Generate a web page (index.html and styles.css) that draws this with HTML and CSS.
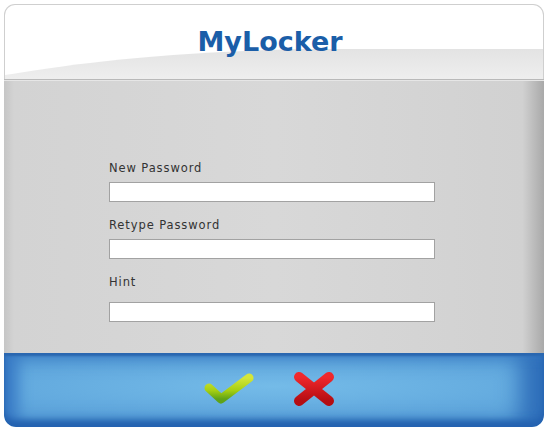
FILE: index.html
```html
<!DOCTYPE html>
<html>
<head>
<meta charset="utf-8">
<link rel="stylesheet" href="styles.css">
</head>
<body>
<div class="frame">
  <div class="header">
    <svg class="swoosh" width="540" height="76" viewBox="0 0 540 76">
      <defs>
        <linearGradient id="sw" x1="0" y1="0" x2="0" y2="1">
          <stop offset="0" stop-color="#e3e3e3"/>
          <stop offset="1" stop-color="#efefef"/>
        </linearGradient>
      </defs>
      <path d="M0,70 C60,60 150,47 300,44 L540,44 L540,76 L0,76 Z" fill="url(#sw)"/>
    </svg>
    <h1 class="title">MyLocker</h1>
  </div>
  <div class="sep"></div>
  <div class="body">
    <label class="label label-first">New Password</label>
    <input class="field" type="password">
    <label class="label">Retype Password</label>
    <input class="field" type="password">
    <label class="label label-hint">Hint</label>
    <input class="field" type="text">
  </div>
  <div class="footer">
    <svg class="icon-ok" width="52" height="36" viewBox="0 0 52 36">
      <defs>
        <linearGradient id="gk" x1="0" y1="0" x2="0" y2="1">
          <stop offset="0" stop-color="#d4e63a"/>
          <stop offset="0.6" stop-color="#a6cf12"/>
          <stop offset="1" stop-color="#5fa318"/>
        </linearGradient>
      </defs>
      <path d="M6,17 L18,28 L46,7" fill="none" stroke="url(#gk)" stroke-width="9" stroke-linecap="round" stroke-linejoin="round"/>
    </svg>
    <svg class="icon-cancel" width="44" height="38" viewBox="0 0 44 38">
      <defs>
        <linearGradient id="gx" x1="0" y1="0" x2="0" y2="1">
          <stop offset="0" stop-color="#f0282c"/>
          <stop offset="1" stop-color="#b40d12"/>
        </linearGradient>
      </defs>
      <path d="M7,7 L37,31 M37,7 L7,31" fill="none" stroke="url(#gx)" stroke-width="10" stroke-linecap="round"/>
    </svg>
  </div>
</div>
</body>
</html>
```
FILE: styles.css
```css
html, body {
  margin: 0;
  padding: 0;
  background: #ffffff;
}
.frame {
  margin: 4px 0 0 4px;
  width: 540px;
  height: 423px;
  display: flex;
  flex-direction: column;
}
.header {
  position: relative;
  height: 75px;
  box-sizing: border-box;
  border: 1px solid #cfcfcf;
  border-bottom: none;
  border-radius: 11px 11px 0 0;
  background: #ffffff;
  overflow: hidden;
}
.swoosh {
  position: absolute;
  left: 0;
  top: 0;
}
.title {
  position: relative;
  margin: 0;
  padding-top: 21px;
  padding-right: 8px;
  text-align: center;
  font-family: "DejaVu Sans", sans-serif;
  font-weight: bold;
  font-size: 27px;
  line-height: 32px;
  color: #1b5ea8;
}
.sep {
  height: 0;
  border-top: 1px solid #b9b9b9;
  border-bottom: 1px solid #e6e6e6;
}
.body {
  height: 272px;
  box-sizing: border-box;
  padding: 80px 0 0 105px;
  display: flex;
  flex-direction: column;
  align-items: flex-start;
  background: linear-gradient(to right, #c6c6c6 0, #d3d3d3 10px, #d8d8d8 50%, #d1d1d1 96%, #a9a9a9 100%);
}
.label {
  display: block;
  font-family: "DejaVu Sans", sans-serif;
  font-size: 11.5px;
  line-height: 14px;
  letter-spacing: 0.9px;
  color: #333333;
  margin: 16px 0 7px 0;
}
.label-first {
  margin-top: 0;
}
.label-hint {
  margin-bottom: 13px;
}
.field {
  display: block;
  width: 326px;
  height: 20px;
  box-sizing: border-box;
  margin: 0;
  padding: 0 4px;
  border: 1px solid #a2a2a2;
  background: #ffffff;
  outline: none;
}
.footer {
  height: 74px;
  box-sizing: border-box;
  border-radius: 0 0 12px 12px;
  display: flex;
  align-items: center;
  justify-content: center;
  gap: 37px;
  padding: 0 10px 3px 0;
  background:
    radial-gradient(ellipse 60% 45% at 50% 45%, #74bbe8 0%, rgba(116,187,232,0) 100%),
    #5fa6dc;
  box-shadow:
    inset 0 3px 2px #2a67b0,
    inset 0 -7px 6px #2462b0,
    inset 14px 0 14px #3a7cc6,
    inset -24px 0 22px #2f6fba;
}
.icon-ok, .icon-cancel {
  display: block;
}
```
